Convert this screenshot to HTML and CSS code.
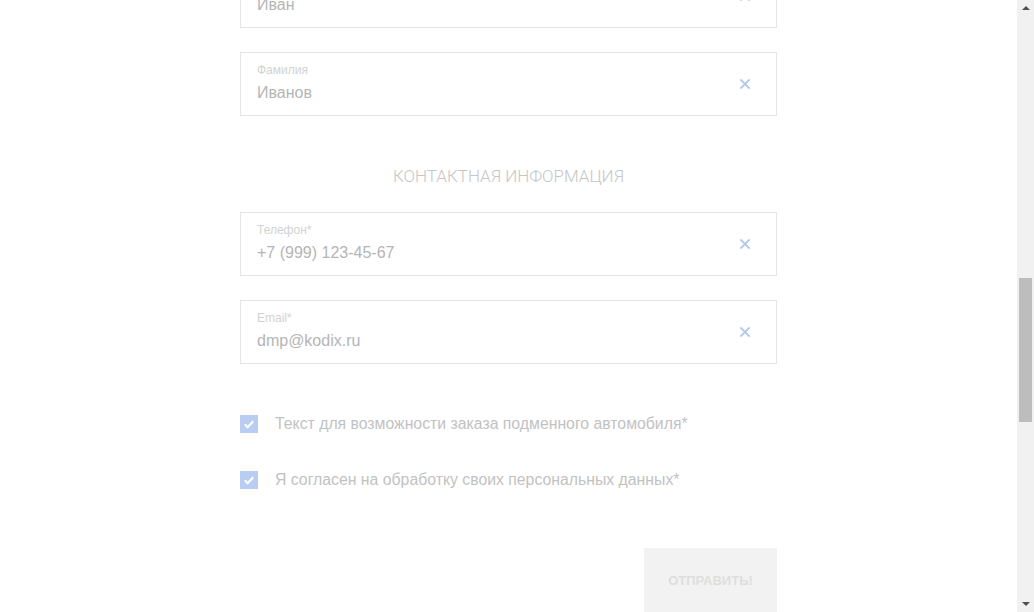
FILE: index.html
```html
<!DOCTYPE html>
<html lang="ru">
<head>
<meta charset="utf-8">
<title>Форма</title>
<link rel="stylesheet" href="styles.css">
</head>
<body>
<div class="page">
  <main class="viewport">
    <form class="form">
      <div class="field">
        <div class="field-text">
          <div class="field-label">Имя*</div>
          <div class="field-value">Иван</div>
        </div>
        <svg class="clear" viewBox="0 0 10 10" width="10" height="10"><path d="M1 1L9 9M9 1L1 9" stroke="#b3c7ef" stroke-width="1.8" stroke-linecap="square"/></svg>
      </div>
      <div class="field">
        <div class="field-text">
          <div class="field-label">Фамилия</div>
          <div class="field-value">Иванов</div>
        </div>
        <svg class="clear" viewBox="0 0 10 10" width="10" height="10"><path d="M1 1L9 9M9 1L1 9" stroke="#b3c7ef" stroke-width="1.8" stroke-linecap="square"/></svg>
      </div>

      <h2 class="section-title">Контактная информация</h2>

      <div class="field">
        <div class="field-text">
          <div class="field-label">Телефон*</div>
          <div class="field-value">+7 (999) 123-45-67</div>
        </div>
        <svg class="clear" viewBox="0 0 10 10" width="10" height="10"><path d="M1 1L9 9M9 1L1 9" stroke="#b3c7ef" stroke-width="1.8" stroke-linecap="square"/></svg>
      </div>
      <div class="field">
        <div class="field-text">
          <div class="field-label">Email*</div>
          <div class="field-value">dmp@kodix.ru</div>
        </div>
        <svg class="clear" viewBox="0 0 10 10" width="10" height="10"><path d="M1 1L9 9M9 1L1 9" stroke="#b3c7ef" stroke-width="1.8" stroke-linecap="square"/></svg>
      </div>

      <div class="checks">
        <label class="check">
          <span class="box"><svg viewBox="0 0 18 18" width="18" height="18"><path d="M4.8 9.3L7.7 12.2L13.2 6.2" fill="none" stroke="#fff" stroke-width="2.2"/></svg></span>
          <span class="check-text">Текст для возможности заказа подменного автомобиля*</span>
        </label>
        <label class="check">
          <span class="box"><svg viewBox="0 0 18 18" width="18" height="18"><path d="M4.8 9.3L7.7 12.2L13.2 6.2" fill="none" stroke="#fff" stroke-width="2.2"/></svg></span>
          <span class="check-text">Я согласен на обработку своих персональных данных*</span>
        </label>
      </div>

      <div class="actions">
        <button type="button" class="submit">Отправить!</button>
      </div>
    </form>
  </main>
  <div class="scrollbar">
    <span class="arrow arrow-up"></span>
    <div class="track">
      <div class="thumb"></div>
    </div>
    <span class="arrow arrow-down"></span>
  </div>
</div>
</body>
</html>
```
FILE: styles.css
```css
html, body {
  margin: 0;
  padding: 0;
  height: 100%;
  overflow: hidden;
  background: #fff;
}
body {
  font-family: "Liberation Sans", Arial, sans-serif;
}
.page {
  display: flex;
  height: 612px;
}
.viewport {
  flex: 1;
  overflow: hidden;
}
.form {
  width: 537px;
  margin: -36px auto 0;
  display: flex;
  flex-direction: column;
}
.field {
  box-sizing: border-box;
  height: 64px;
  border: 1px solid #e5e5e5;
  display: flex;
  align-items: center;
  padding: 0 26px 0 16px;
  margin-bottom: 24px;
}
.field-text {
  flex: 1;
  align-self: flex-start;
  padding-top: 10px;
}
.field-label {
  font-size: 12px;
  line-height: 14px;
  color: #d2d2d2;
}
.field-value {
  margin-top: 6px;
  font-size: 16px;
  line-height: 20px;
  color: #b5b5b5;
}
.clear {
  display: block;
}
.section-title {
  margin: 26px 0 26px;
  font-family: Roboto, "Liberation Sans", sans-serif;
  font-weight: 300;
  font-size: 17px;
  line-height: 20px;
  text-transform: uppercase;
  text-align: center;
  color: #c6c6c6;
}
.checks {
  display: flex;
  flex-direction: column;
  gap: 36px;
  margin-top: 26px;
}
.check {
  display: flex;
  align-items: center;
  height: 20px;
  gap: 17px;
}
.box {
  width: 18px;
  height: 18px;
  background: #b8cdf1;
  display: block;
}
.box svg {
  display: block;
}
.check-text {
  font-size: 15.8px;
  line-height: 20px;
  color: #c2c2c2;
}
.actions {
  display: flex;
  justify-content: flex-end;
  margin-top: 58px;
}
.submit {
  width: 133px;
  height: 64px;
  border: 0;
  background: #f2f2f2;
  font-family: "Liberation Sans", Arial, sans-serif;
  font-weight: bold;
  font-size: 13px;
  text-transform: uppercase;
  color: #dedede;
  padding: 0;
}
.scrollbar {
  width: 17px;
  background: #f1f1f1;
  display: flex;
  flex-direction: column;
  align-items: center;
}
.arrow {
  display: block;
  width: 0;
  height: 0;
  border-left: 4px solid transparent;
  border-right: 4px solid transparent;
}
.arrow-up {
  margin-top: 6px;
  border-bottom: 4px solid #505050;
}
.arrow-down {
  margin-bottom: 6px;
  border-top: 4px solid #505050;
}
.track {
  flex: 1;
  width: 100%;
  display: flex;
  flex-direction: column;
  align-items: center;
}
.thumb {
  width: 13px;
  height: 144px;
  margin-top: 268px;
  background: #bdbdbd;
}
```
